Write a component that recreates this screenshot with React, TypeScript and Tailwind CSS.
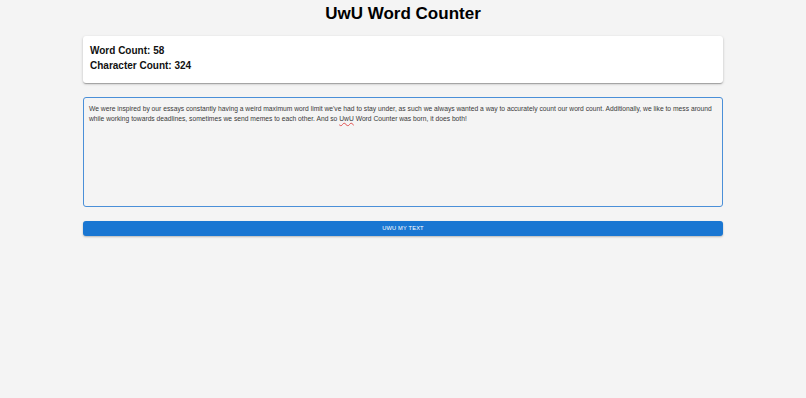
import React from "react";

export default function App() {
  return (
    <div className="min-h-[398px] bg-[#f4f4f4] font-['Liberation_Sans',Arial,sans-serif] text-black">
      <div className="mx-auto w-[640px] pt-[4px]">
        <h1 className="text-center text-[17px] font-bold leading-[20px]">UwU Word Counter</h1>
        <div className="mt-[12px] rounded-[3px] bg-white px-[7px] pt-[7px] pb-[10px] shadow-[0_1px_3px_rgba(0,0,0,0.2),0_1px_1px_rgba(0,0,0,0.14),0_2px_1px_-1px_rgba(0,0,0,0.12)]">
          <div className="text-[10px] font-bold leading-[15px] text-[#111]">Word Count: 58</div>
          <div className="text-[10px] font-bold leading-[15px] text-[#111]">Character Count: 324</div>
        </div>
        <div className="mt-[14px] h-[110px] rounded-[3px] border border-[#4a8fd8] bg-[#f4f4f4] px-[5px] pt-[6px] text-[6.72px] leading-[9.5px] text-[#3a3a3a]">
          We were inspired by our essays constantly having a weird maximum word limit we've had to stay under, as such we always wanted a way to accurately count our word count. Additionally, we like to mess around while working towards deadlines, sometimes we send memes to each other. And so{" "}
          <span className="underline decoration-wavy decoration-[#e05050] decoration-[0.5px] underline-offset-[0.5px]">UwU</span> Word Counter was born, it does both!
        </div>
        <button className="mt-[14px] flex h-[15px] w-full items-center justify-center rounded-[3px] bg-[#1976d2] text-[5.7px] tracking-[0.03em] text-white shadow-[0_1px_2px_rgba(0,0,0,0.25)]">
          UWU MY TEXT
        </button>
      </div>
    </div>
  );
}
